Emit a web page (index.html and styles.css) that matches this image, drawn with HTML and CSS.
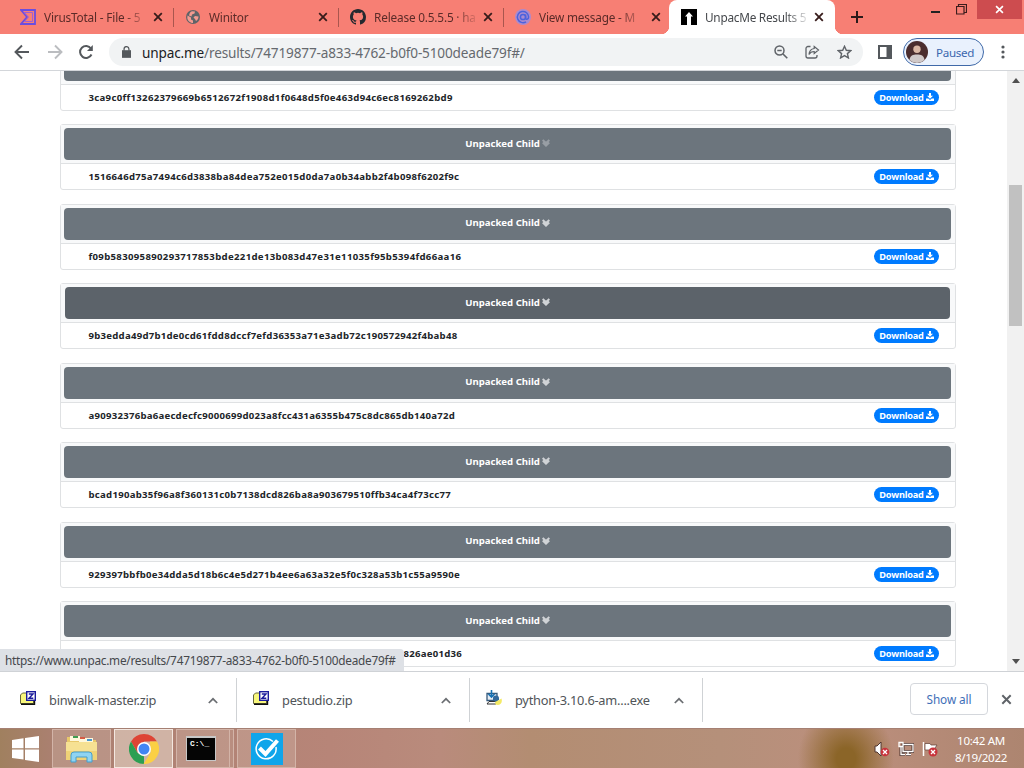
FILE: index.html
```html
<!DOCTYPE html>
<html lang="en">
<head>
    <meta charset="UTF-8">
    <title>UnpacMe Results</title>
    <link rel="stylesheet" href="styles.css">
</head>
<body>
    <!-- Shared icons -->
    <svg class="defs">
        <symbol id="close" viewBox="0 0 10 10"><path d="M1.2 1.2l7.6 7.6M8.8 1.2L1.2 8.8" fill="none" stroke="currentColor" stroke-width="1.8"/></symbol>
        <symbol id="angles" viewBox="0 0 8 8"><path d="M.6 1L4 4 7.400 1M.8 3.600L4 6.600 7.200 3.600" fill="none" stroke="currentColor" stroke-width="2.100"/></symbol>
        <symbol id="dl" viewBox="0 0 16 16"><path d="M6 0h4v5.500h4L8 11.500 2 5.500h4zM0 11h4.600L8 14l3.400-3H16v5H0z" fill="currentColor"/></symbol>
        <symbol id="chevron" viewBox="0 0 10 7"><path d="M.8 6L5 1.8 9.2 6" fill="none" stroke="#6b6e72" stroke-width="1.7"/></symbol>
        <symbol id="zip" viewBox="0 0 16 14"><path d="M.5 4l2-2H7v2h6.500v8.500H.5z" fill="#f8f77c" stroke="#66663c"/><path d="M1 13.300h13.500V9" fill="none" stroke="#111" stroke-width="1.400"/><rect x="6.700" y=".7" width="8.600" height="8.600" fill="#fff" stroke="#1b1b9c" stroke-width="1.400"/><path d="M8.800 3h4.200L9 7.200h4.300" fill="none" stroke="#1b1b9c" stroke-width="1.400"/></symbol>
    </svg>

    <div class="tabs">
        <div class="tab">
            <svg class="favicon" width="16" height="16" viewBox="0 0 16 16"><path d="M1 1h14v14H1l6-7z" fill="none" stroke="#6a4de0" stroke-width="1.800"/><path d="M4 3.500h8.500v9H4.500L8.500 8z" fill="none" stroke="#a15fd0" stroke-width="1"/></svg>
            <span class="title">VirusTotal - File - 5</span>
            <svg class="close"><use href="#close"/></svg>
        </div>
        <div class="tab">
            <svg class="favicon" width="16" height="16" viewBox="0 0 16 16"><circle cx="8" cy="8" r="7" fill="#5f6368"/><path d="M2.500 6.500L6 8.500v2l2 1v2.500C5 14 2.500 11.500 2.300 9zM7 2.300l3 .2-.5 2-2.500 1-.5 2-2.500-1C4.500 4 5.500 2.800 7 2.300zM10 7l3.500.5c0 2-1 3.500-2.500 4.500L10 10 8.500 8.500z" fill="#f39a90"/></svg>
            <span class="title">Winitor</span>
            <svg class="close"><use href="#close"/></svg>
        </div>
        <div class="tab">
            <svg class="favicon" width="16" height="16" viewBox="0 0 16 16"><path fill="#24292f" d="M8 0C3.580 0 0 3.580 0 8c0 3.540 2.290 6.530 5.470 7.590.4.070.55-.17.55-.38 0-.19-.010-.82-.010-1.490-2.010.37-2.530-.49-2.690-.94-.09-.23-.48-.94-.82-1.130-.28-.15-.68-.52-.010-.53.63-.010 1.080.58 1.230.82.72 1.210 1.870.87 2.330.66.070-.52.28-.87.510-1.070-1.780-.2-3.640-.89-3.640-3.950 0-.87.310-1.590.82-2.150-.08-.2-.36-1.020.08-2.120 0 0 .67-.21 2.200.82a7.640 7.640 0 0 1 4 0c1.530-1.040 2.200-.82 2.200-.82.44 1.100.16 1.920.08 2.120.51.56.82 1.270.82 2.150 0 3.070-1.870 3.750-3.650 3.950.29.25.54.73.54 1.480 0 1.070-.010 1.930-.010 2.200 0 .21.15.46.55.38A8.010 8.010 0 0 0 16 8c0-4.420-3.580-8-8-8z"/></svg>
            <span class="title">Release 0.5.5.5 · ha</span>
            <svg class="close"><use href="#close"/></svg>
        </div>
        <div class="tab">
            <svg class="favicon" width="16" height="16" viewBox="0 0 16 16"><circle cx="8" cy="8" r="8" fill="#a98bd0"/><circle cx="8" cy="8" r="2.600" fill="none" stroke="#4b62dd" stroke-width="1.500"/><path d="M10.600 5.500V9c0 2 3 1.700 3-1A5.600 5.600 0 1 0 11 12.800" fill="none" stroke="#4b62dd" stroke-width="1.500"/></svg>
            <span class="title">View message - M</span>
            <svg class="close"><use href="#close"/></svg>
        </div>
        <div class="tab active">
            <svg class="favicon" width="16" height="16" viewBox="0 0 16 16"><path d="M0 0h16v16H0z" fill="#000"/><path d="M8 3l4 4.500h-2V16H6V7.500H4z" fill="#fff"/></svg>
            <span class="title">UnpacMe Results 5</span>
            <svg class="close"><use href="#close"/></svg>
        </div>
        <svg class="plus" width="12" height="12" viewBox="0 0 12 12"><path d="M6 0v12M0 6h12" stroke="#2b1a1a" stroke-width="2"/></svg>
        <div class="window-btns">
            <svg class="min" width="9" height="3"><path d="M0 1h9" stroke="#222" stroke-width="2"/></svg>
            <svg class="restore" width="11" height="11" viewBox="0 0 11 11"><path d="M.5 2.500h7.500v7.500H.5zM2.500 2.500v-2h8v8H8" fill="none" stroke="#3c1c1c" stroke-width="1.200"/></svg>
            <div class="win-close"><svg width="9" height="9"><use href="#close"/></svg></div>
        </div>
    </div>

    <div class="toolbar">
        <svg class="back" width="16" height="16" viewBox="0 0 16 16"><path d="M15 8H2M8 1.500L1.500 8 8 14.500" fill="none" stroke="#54585c" stroke-width="1.900"/></svg>
        <svg class="forward" width="16" height="16" viewBox="0 0 16 16"><path d="M1 8h13M8 1.500L14.500 8 8 14.500" fill="none" stroke="#bbbdc0" stroke-width="1.900"/></svg>
        <svg class="reload" width="16" height="16" viewBox="0 0 16 16"><path d="M13.500 10.500A6 6 0 1 1 13 4.500" fill="none" stroke="#54585c" stroke-width="2"/><path d="M14.800 1v6H9z" fill="#54585c"/></svg>
        <div class="omnibox">
            <svg width="9" height="12" viewBox="0 0 10 13"><path d="M0 4.500h10V13H0z" fill="#54585c"/><path d="M2.300 5V3.200a2.700 2.700 0 0 1 5.400 0V5" fill="none" stroke="#54585c" stroke-width="1.400"/></svg>
            <span class="url"><b>unpac.me</b>/results/74719877-a833-4762-b0f0-5100deade79f#/</span>
            <div class="omni-icons">
                <svg width="14" height="14" viewBox="0 0 14 14"><circle cx="5.500" cy="5.500" r="4.500" fill="none" stroke="#5f6368" stroke-width="1.500"/><path d="M3.300 5.500h4.400M9 9l4.300 4.300" stroke="#5f6368" stroke-width="1.600"/></svg>
                <svg width="15" height="14" viewBox="0 0 15 14"><path d="M5.500 1.500H3a2 2 0 0 0-2 2v7.500a2 2 0 0 0 2 2h7a2 2 0 0 0 2-2V10" fill="none" stroke="#5f6368" stroke-width="1.300"/><path d="M9.200 1.500L13.500 5 9.200 8.500v-2C6.500 6.500 5 7.500 4 9.500c.2-3 2-5.500 5.200-6z" fill="none" stroke="#5f6368" stroke-width="1.200"/></svg>
                <svg width="15" height="14" viewBox="0 0 15 14"><path d="M7.500 1.300l1.800 4 4.400.4-3.300 2.900 1 4.300-3.900-2.300-3.900 2.300 1-4.300L1.300 5.700l4.400-.4z" fill="none" stroke="#5f6368" stroke-width="1.400"/></svg>
            </div>
        </div>
        <svg class="panel" width="14" height="14" viewBox="0 0 14 14"><path d="M1 1h12v12H1z" fill="#fff" stroke="#54585c" stroke-width="2"/><path d="M8.500 1H13v12H8.500z" fill="#54585c"/></svg>
        <div class="profile">
            <svg width="22" height="22" viewBox="0 0 22 22"><circle cx="11" cy="11" r="11" fill="#4a2d2e"/><circle cx="11" cy="8.300" r="3.700" fill="#d9b7a4"/><path d="M3.500 19C4 14.500 7 13.500 11 13.500s7 1 7.500 5.500A11 11 0 0 1 3.500 19z" fill="#cfc8c8"/></svg>
            <span>Paused</span>
        </div>
        <svg class="menu" width="4" height="14" viewBox="0 0 4 14"><g fill="#54585c"><circle cx="2" cy="2" r="1.600"/><circle cx="2" cy="7" r="1.600"/><circle cx="2" cy="12" r="1.600"/></g></svg>
    </div>

    <div class="viewport">
        <div class="results">
            <!-- header of the first card is scrolled out of view -->
            <div class="card">
                <div class="card-header"><a class="btn"></a></div>
                <div class="card-body"><span class="hash h1">3ca9c0ff13262379669b6512672f1908d1f0648d5f0e463d94c6ec8169262bd9</span><a class="badge">Download <svg><use href="#dl"/></svg></a></div>
            </div>
            <div class="card">
                <div class="card-header"><a class="btn faded">Unpacked Child <svg><use href="#angles"/></svg></a></div>
                <div class="card-body"><span class="hash h2">1516646d75a7494c6d3838ba84dea752e015d0da7a0b34abb2f4b098f6202f9c</span><a class="badge">Download <svg><use href="#dl"/></svg></a></div>
            </div>
            <div class="card">
                <div class="card-header"><a class="btn">Unpacked Child <svg><use href="#angles"/></svg></a></div>
                <div class="card-body"><span class="hash h3">f09b583095890293717853bde221de13b083d47e31e11035f95b5394fd66aa16</span><a class="badge">Download <svg><use href="#dl"/></svg></a></div>
            </div>
            <div class="card">
                <div class="card-header"><a class="btn hover">Unpacked Child <svg><use href="#angles"/></svg></a></div>
                <div class="card-body"><span class="hash h4">9b3edda49d7b1de0cd61fdd8dccf7efd36353a71e3adb72c190572942f4bab48</span><a class="badge">Download <svg><use href="#dl"/></svg></a></div>
            </div>
            <div class="card">
                <div class="card-header"><a class="btn">Unpacked Child <svg><use href="#angles"/></svg></a></div>
                <div class="card-body"><span class="hash h5">a90932376ba6aecdecfc9000699d023a8fcc431a6355b475c8dc865db140a72d</span><a class="badge">Download <svg><use href="#dl"/></svg></a></div>
            </div>
            <div class="card">
                <div class="card-header"><a class="btn">Unpacked Child <svg><use href="#angles"/></svg></a></div>
                <div class="card-body"><span class="hash h6">bcad190ab35f96a8f360131c0b7138dcd826ba8a903679510ffb34ca4f73cc77</span><a class="badge">Download <svg><use href="#dl"/></svg></a></div>
            </div>
            <div class="card">
                <div class="card-header"><a class="btn">Unpacked Child <svg><use href="#angles"/></svg></a></div>
                <div class="card-body"><span class="hash h7">929397bbfb0e34dda5d18b6c4e5d271b4ee6a63a32e5f0c328a53b1c55a9590e</span><a class="badge">Download <svg><use href="#dl"/></svg></a></div>
            </div>
            <div class="card">
                <div class="card-header"><a class="btn">Unpacked Child <svg><use href="#angles"/></svg></a></div>
                <div class="card-body"><span class="hash tail">826ae01d36</span><a class="badge">Download <svg><use href="#dl"/></svg></a></div>
            </div>
        </div>
        <div class="scrollbar">
            <svg width="8" height="5"><path d="M0 5l4-5 4 5z" fill="#505050"/></svg>
            <div class="thumb"></div>
            <svg width="8" height="5"><path d="M0 0l4 5 4-5z" fill="#505050"/></svg>
        </div>
        <div class="status"><span>https://www.unpac.me/results/74719877-a833-4762-b0f0-5100deade79f#</span></div>
    </div>

    <div class="downloads">
        <div class="file first"><svg class="ficon"><use href="#zip"/></svg><span>binwalk-master.zip</span><svg class="chev"><use href="#chevron"/></svg></div>
        <div class="file"><svg class="ficon"><use href="#zip"/></svg><span>pestudio.zip</span><svg class="chev"><use href="#chevron"/></svg></div>
        <div class="file">
            <svg class="ficon" viewBox="0 0 16 16"><path d="M1 3.500h10v7H1z" fill="#e8eef5" stroke="#365a7c" stroke-width="1.300"/><path d="M5.500 0v7M2.500 4l3 3.200 3-3.200" fill="none" stroke="#1672b5" stroke-width="1.600"/><path d="M1 14l2-2.500h8L10 14z" fill="#fff" stroke="#333"/><path d="M7 10V7.500c0-2 5-3 6 0v2.500L9.500 12z" fill="#32699c"/><path d="M9 12l4-2 2.500-1.500c1.500 5-2 7.500-6 6z" fill="#f4ea65"/></svg>
            <span>python-3.10.6-am....exe</span><svg class="chev"><use href="#chevron"/></svg>
        </div>
        <a class="show-all"><span>Show all</span></a>
        <svg class="shelf-close"><use href="#close"/></svg>
    </div>

    <div class="taskbar">
        <div class="start"><svg width="27" height="26" viewBox="0 0 27 26"><path d="M0 4l11.500-1.700V12.300H0zM13 2l14-2v12.300H13zM0 13.500h11.500v10L0 22zM13 13.500h14V26l-14-2z" fill="#fff"/></svg></div>
        <div class="task w1">
            <svg width="34" height="30" viewBox="0 0 34 30"><path d="M2 3h9l2 3h18v20H2z" fill="#e8c86a"/><path d="M5 2h10v5H5zM14 4h14v5H14z" fill="#fff8dc"/><path d="M8 2h5v2H8z" fill="#3f9d51"/><path d="M15 3h5v2h-5z" fill="#d65b45"/><path d="M22 5h5v2h-5z" fill="#4a98cf"/><path d="M1 8h31v18H1z" fill="#f6e193"/><path d="M1 17h31v9H1z" fill="#efd276"/><path d="M6 28v-7q0-3 3-3h15q3 0 3 3v7h-5v-5H11v5z" fill="#8fd4f2" stroke="#459fcd"/></svg>
        </div>
        <div class="task w2">
            <svg width="30" height="30" viewBox="0 0 30 30"><path d="M15 0A15 15 0 0 1 28 7.500H15L8.500 18.800 2 7.500A15 15 0 0 1 15 0z" fill="#de4435"/><path d="M2 7.500l6.500 11.300L15 22.500 15 30A15 15 0 0 1 2 7.500z" fill="#2c9f52"/><path d="M28 7.500A15 15 0 0 1 14.500 30L21.500 18.800 21 7.500z" fill="#fbd044"/><circle cx="15" cy="15" r="7" fill="#fff"/><circle cx="15" cy="15" r="5.500" fill="#4285f4"/></svg>
        </div>
        <div class="task w3 stack">
            <svg width="30" height="25" viewBox="0 0 30 25"><path d="M0 0h30v25H0z" fill="#c7c7c7"/><path d="M1 2h28v22H1z" fill="#050505"/></svg>
            <span class="prompt">C:\_</span>
        </div>
        <div class="task w4">
            <svg width="32" height="32" viewBox="0 0 32 32"><path d="M0 0h32v32H0z" fill="#0fa5ea"/><path d="M22 8.500A10 10 0 1 0 25 14" fill="none" stroke="#fff" stroke-width="1.500"/><path d="M8.500 15l6 6L26.500 7.500" fill="none" stroke="#fff" stroke-width="4"/></svg>
        </div>
        <div class="tray">
            <svg width="16" height="16" viewBox="0 0 16 16"><path d="M1 5h2l4-4v14l-4-4H1z" fill="#fff" stroke="#4e352f"/><circle cx="11" cy="11" r="4.300" fill="#c8343c"/><path d="M9 9l4 4M13 9l-4 4" stroke="#fff" stroke-width="1.300"/></svg>
            <svg width="16" height="16" viewBox="0 0 16 16"><path d="M5 3.500h10v7H5zM8 13.500h5M10 10.500v3M3 6v7.500h4" fill="none" stroke="#4e352f" stroke-width="3"/><path d="M5 3.500h10v7H5zM8 13.500h5M10 10.500v3M3 6v7.500h4M1 1.500h4v4H1z" fill="none" stroke="#fff" stroke-width="1.300"/></svg>
            <svg width="16" height="16" viewBox="0 0 16 16"><path d="M1.500 1v14" stroke="#fff" stroke-width="1.500"/><path d="M3 2.500h5l1 1.500h6l-2 3 2 3H9L8 9H3z" fill="#fff" stroke="#5f3c35" stroke-width=".7"/><circle cx="11" cy="11" r="4.500" fill="#c8343c"/><path d="M9 9l4 4M13 9l-4 4" stroke="#fff" stroke-width="1.300"/></svg>
        </div>
        <div class="clock"><span>10:42 AM</span><span>8/19/2022</span></div>
    </div>
</body>
</html>
```
FILE: styles.css
```css
* {
    box-sizing: border-box;
}
body {
    margin: 0;
    width: 1024px;
    height: 768px;
    overflow: hidden;
    display: flex;
    flex-direction: column;
    font-family: "Noto Sans", "Open Sans", sans-serif;
    background-color: white;
}
svg {
    display: block;
    flex: none;
}
span {
    white-space: nowrap;
}
.defs {
    position: absolute;
    width: 0;
    height: 0;
}

/* Tab strip */
.tabs {
    height: 34px;
    flex: none;
    display: flex;
    align-items: center;
    padding-left: 9px;
    background-color: #f77f74;
}
.tab {
    width: 165px;
    height: 34px;
    flex: none;
    display: flex;
    align-items: center;
    padding-left: 11px;
    color: #5b2b28;
    position: relative;
}
.tab:nth-child(-n+3)::after {
    content: "";
    width: 1px;
    height: 19px;
    margin-left: 10px;
    background-color: #a9564e;
}
.title {
    width: 104px;
    margin-left: 8px;
    overflow: hidden;
    font-size: 11.8px;
    letter-spacing: -0.18px;
    -webkit-mask-image: linear-gradient(90deg, #000 80px, transparent 106px);
}
.close {
    width: 10px;
    height: 10px;
    margin-left: 8px;
    color: #371c1b;
}
.tab.active {
    width: 166px;
    padding-left: 12px;
    background-color: white;
    border-radius: 8px 8px 0 0;
    color: #45484c;
}
.active .title {
    width: 101px;
    letter-spacing: -0.25px;
}
.tab.active::before,
.tab.active::after {
    content: "";
    position: absolute;
    bottom: 0;
    width: 8px;
    height: 8px;
}
.tab.active::before {
    left: -8px;
    background: radial-gradient(circle at 0 0, transparent 8px, white 8.5px);
}
.tab.active::after {
    right: -8px;
    background: radial-gradient(circle at 100% 0, transparent 8px, white 8.5px);
}
.plus {
    margin-left: 16px;
}
.window-btns {
    display: flex;
    align-self: flex-start;
    margin-left: auto;
}
.min {
    margin-top: 11px;
}
.restore {
    margin: 4px 10px 0 16px;
}
.win-close {
    width: 45px;
    height: 19px;
    margin-right: 2px;
    display: flex;
    align-items: center;
    justify-content: center;
    color: white;
    background-color: #cd4c4f;
}

/* Address bar */
.toolbar {
    height: 37px;
    flex: none;
    display: flex;
    align-items: center;
    padding-left: 14px;
    border-bottom: 1px solid #d3d6da;
    background-color: white;
}
.forward {
    margin-left: 17px;
}
.reload {
    margin-left: 15px;
}
.omnibox {
    width: 754px;
    height: 28px;
    margin-left: 15px;
    padding-left: 13px;
    display: flex;
    align-items: center;
    border-radius: 14px;
    background-color: #f1f3f4;
}
.url {
    margin-left: 11px;
    font-size: 13.6px;
    letter-spacing: -0.16px;
    color: #65696e;
}
.url b {
    font-weight: normal;
    color: #202124;
}
.omni-icons {
    display: flex;
    gap: 17px;
    margin-left: auto;
    margin-right: 11px;
}
.panel {
    margin-left: 15px;
}
.profile {
    width: 81px;
    height: 28px;
    margin-left: 11px;
    padding-left: 2px;
    display: flex;
    align-items: center;
    gap: 8px;
    border: 1px solid #3f69a8;
    border-radius: 14px;
    background-color: #e9f1fd;
    color: #3b67ae;
    font-size: 11.6px;
    letter-spacing: -0.3px;
}
.menu {
    margin-left: 17px;
}

/* Page content */
.viewport {
    height: 600px;
    flex: none;
    display: flex;
    overflow: hidden;
    position: relative;
}
.results {
    width: 896px;
    margin: -26.1px 0 0 60px;
}
.card {
    height: 66px;
    margin-bottom: 13.5px;
    border: 1px solid #dfe1e3;
    border-radius: 3px;
    font-size: 9.6px;
    font-weight: bold;
}
.card-header {
    height: 39px;
    padding: 3px 4px 3px 3px;
    border-bottom: 1px solid #dfe1e3;
    background-color: #f8f9fa;
}
.btn {
    height: 32px;
    display: flex;
    align-items: center;
    justify-content: center;
    gap: 2px;
    padding-bottom: 2px;
    border-radius: 4px;
    color: white;
    background-color: #6c757d;
}
.btn svg {
    width: 8px;
    height: 8px;
    color: #d0d3d6;
}
.btn.faded svg {
    color: #989ea4;
}
.btn.hover {
    margin: 0 1px;
    background-color: #5c636a;
}
.card-body {
    height: 25px;
    display: flex;
    align-items: center;
    justify-content: space-between;
    padding: 0 16px 0 27.5px;
    color: #212529;
}

/* Spacing for each hash so the columns of digits run the right length */
.h1 {
    letter-spacing: 0.31px;
}
.h2 {
    letter-spacing: 0.285px;
}
.h3 {
    letter-spacing: 0.325px;
}
.h4 {
    letter-spacing: 0.255px;
}
.h5 {
    letter-spacing: 0.25px;
}
.h6 {
    letter-spacing: 0.27px;
}
.h7 {
    letter-spacing: 0.265px;
}
.tail {
    margin-left: 315px;
    letter-spacing: 0.26px;
}
.badge {
    width: 65px;
    height: 15px;
    display: flex;
    align-items: center;
    justify-content: center;
    gap: 2px;
    border-radius: 8px;
    color: white;
    background-color: #007bff;
    font-size: 9.2px;
    letter-spacing: -0.2px;
}
.badge svg {
    width: 8px;
    height: 8px;
    margin-top: -1px;
}
.scrollbar {
    width: 17px;
    margin-left: auto;
    display: flex;
    flex-direction: column;
    align-items: center;
    justify-content: space-between;
    padding: 7px 0;
    background-color: #f1f1f1;
}
.thumb {
    width: 13px;
    height: 141px;
    margin: 102px 0 auto;
    background-color: #c1c1c1;
}
.status {
    position: absolute;
    left: 0;
    bottom: 0;
    width: 404px;
    height: 22px;
    padding-left: 5px;
    display: flex;
    align-items: center;
    border-top-right-radius: 4px;
    background-color: #dee1e6;
    color: #45484c;
    font-size: 11.8px;
    letter-spacing: -0.24px;
}

/* Download shelf */
.downloads {
    height: 57px;
    flex: none;
    display: flex;
    align-items: center;
    border-top: 1px solid #cfd2d6;
    background-color: white;
}
.file {
    width: 233px;
    height: 44px;
    display: flex;
    align-items: center;
    padding: 0 18px 0 16px;
    border-right: 1px solid #cfd2d5;
    color: #505458;
    font-size: 12.8px;
    letter-spacing: -0.24px;
}
.file.first {
    width: 237px;
    padding-left: 20px;
}
.ficon {
    width: 16px;
    height: 16px;
    margin: -4px 13px 0 0;
}
.chev {
    width: 10px;
    height: 7px;
    margin-left: auto;
}
.show-all {
    width: 78px;
    height: 32px;
    margin-left: auto;
    margin-top: -2px;
    display: flex;
    align-items: center;
    justify-content: center;
    border: 1px solid #d4d7dc;
    border-radius: 4px;
    color: #3f6fb8;
    font-size: 11.8px;
    letter-spacing: -0.1px;
}
.shelf-close {
    width: 11px;
    height: 11px;
    margin: -2px 12px 0 13px;
    color: #5f6368;
}

/* Windows taskbar */
.taskbar {
    height: 40px;
    flex: none;
    display: flex;
    border-top: 1px solid #a58073;
    background: radial-gradient(ellipse 48px 55px at 846px 30px, #8b6528 20%, transparent), linear-gradient(90deg, #a0805f 0, #ab8071 55px, #b78578 330px, #b98b7c 440px, #b38d72 530px, #b5907a 720px, #bc8f7d 850px, #ad8570 1024px);
}
.start {
    width: 52px;
    padding-right: 2px;
    display: flex;
    align-items: center;
    justify-content: center;
}
.task {
    height: 39px;
    margin-right: 3px;
    display: flex;
    align-items: center;
    justify-content: center;
    border: 1px solid #d3b4a8;
    background-color: rgba(225, 205, 190, .25);
}
.w1 {
    width: 59px;
}
.w2 {
    width: 59px;
    border-color: #f3e7e0;
    background-color: rgba(235, 220, 205, .55);
}
.w3 {
    width: 54px;
    padding-right: 4px;
    position: relative;
}
.stack {
    margin-right: 7px;
    box-shadow: 4px 0 0 -1px #b98e80, 4px 0 0 0 #d3b4a8;
}
.w4 {
    width: 59px;
}
.prompt {
    position: absolute;
    left: 13px;
    top: 9px;
    color: white;
    font: bold 8px "Liberation Mono", monospace;
}
.tray {
    display: flex;
    align-items: center;
    gap: 8px;
    margin-left: auto;
}
.clock {
    width: 86px;
    display: flex;
    flex-direction: column;
    align-items: center;
    justify-content: center;
    color: white;
    font-size: 11.6px;
    letter-spacing: -0.35px;
    line-height: 17px;
}
```
